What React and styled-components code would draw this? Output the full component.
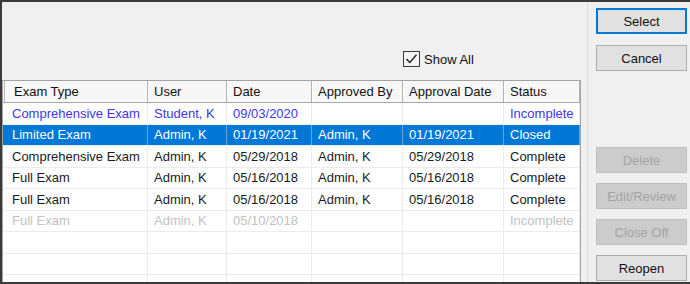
import React from "react";
import styled, { createGlobalStyle } from "styled-components";

const Global = createGlobalStyle`
  html, body { margin: 0; padding: 0; background: #f0f0f0; }
  body { font-family: "Liberation Sans", Arial, sans-serif; font-size: 13px; }
`;

const Window = styled.div`
  width: 690px;
  height: 284px;
  box-sizing: border-box;
  border-top: 2px solid #3a3a3a;
  border-left: 2px solid #3a3a3a;
  border-bottom: 2px solid #3a3a3a;
  background: #f0f0f0;
  display: flex;
  overflow: hidden;
`;

const LeftPane = styled.div`
  width: 586px;
  border-right: 1px solid #dadada;
  display: flex;
  flex-direction: column;
  padding-right: 6px;
  box-sizing: border-box;
`;

const TopArea = styled.div`
  height: 78px;
  flex-shrink: 0;
  display: flex;
  align-items: flex-end;
  padding-left: 401px;
  padding-bottom: 13px;
  box-sizing: border-box;
`;

const CheckLabel = styled.label`
  display: flex;
  align-items: center;
  gap: 4px;
  color: #111;
  font-size: 13px;
`;

const Grid = styled.div`
  flex: 1;
  background: #fff;
  border: 1px solid #a3a3a3;
  border-bottom: none;
  overflow: hidden;
`;

const cols = [145, 79, 85, 91, 101, 76];

const Row = styled.div`
  display: grid;
  grid-template-columns: ${cols.map((c) => c + "px").join(" ")};
  height: ${(p) => (p.$header ? "22px" : "21.5px")};
  box-sizing: border-box;
  border-bottom: 1px solid ${(p) => (p.$header ? "#a8a8a8" : "#ececec")};
  background: ${(p) => (p.$selected ? "#0078d7" : p.$header ? "#f7f7f7" : "#fff")};
  color: ${(p) =>
    p.$selected ? "#fff" : p.$tone === "blue" ? "#3d35f5" : p.$tone === "gray" ? "#c2c2c2" : "#1a1a1a"};
`;

const Cell = styled.div`
  display: flex;
  align-items: center;
  padding-left: ${(p) => (p.$first ? "9px" : "6px")};
  white-space: nowrap;
  overflow: hidden;
  box-sizing: border-box;
  border-right: 1px solid ${(p) => (p.$sel ? "rgba(255,255,255,0.35)" : "#ececec")};
  font-size: 13px;
`;

const HeadCell = styled(Cell)`
  border-right: 1px solid #b4b4b4;
  box-shadow: inset 1px 0 0 #ffffff;
  color: #111;
  ${(p) => p.$first && "border-left: 1px solid #b4b4b4; margin-left: 1px;"}
`;

const RightPane = styled.div`
  flex: 1;
  display: flex;
  flex-direction: column;
  padding: 6px 0 0 8px;
  box-sizing: border-box;
`;

const Button = styled.button`
  flex-shrink: 0;
  width: 91px;
  height: 26px;
  box-sizing: border-box;
  font-family: "Liberation Sans", Arial, sans-serif;
  font-size: 13px;
  padding: 0;
  margin: 0 0 ${(p) => (p.$mb !== undefined ? p.$mb : 10)}px 0;
  background: ${(p) => (p.disabled ? "#cccccc" : "#e1e1e1")};
  color: ${(p) => (p.disabled ? "#a3a3a3" : "#111")};
  border: ${(p) => (p.$focus ? "2px solid #0078d7" : p.disabled ? "1px solid #bfbfbf" : "1px solid #adadad")};
`;

const Spacer = styled.div`
  flex-shrink: 0;
  height: 66px;
`;

const header = ["Exam Type", "User", "Date", "Approved By", "Approval Date", "Status"];
const rows = [
  { cells: ["Comprehensive Exam", "Student, K", "09/03/2020", "", "", "Incomplete"], tone: "blue" },
  { cells: ["Limited Exam", "Admin, K", "01/19/2021", "Admin, K", "01/19/2021", "Closed"], selected: true },
  { cells: ["Comprehensive Exam", "Admin, K", "05/29/2018", "Admin, K", "05/29/2018", "Complete"] },
  { cells: ["Full Exam", "Admin, K", "05/16/2018", "Admin, K", "05/16/2018", "Complete"] },
  { cells: ["Full Exam", "Admin, K", "05/16/2018", "Admin, K", "05/16/2018", "Complete"] },
  { cells: ["Full Exam", "Admin, K", "05/10/2018", "", "", "Incomplete"], tone: "gray" },
  { cells: ["", "", "", "", "", ""] },
  { cells: ["", "", "", "", "", ""] },
  { cells: ["", "", "", "", "", ""] },
];

const CheckBox = () => (
  <svg width="17" height="16" viewBox="0 0 17 16">
    <rect x="0.5" y="0.5" width="16" height="15" fill="#f4f4f4" stroke="#3c3c3c" />
    <path d="M3.5 8 L6.8 11.5 L13.5 3.8" fill="none" stroke="#222" strokeWidth="1.4" />
  </svg>
);

export default function App() {
  return (
    <>
      <Global />
      <Window>
        <LeftPane>
          <TopArea>
            <CheckLabel>
              <CheckBox />
              Show All
            </CheckLabel>
          </TopArea>
          <Grid>
            <Row $header>
              {header.map((h, i) => (
                <HeadCell key={i} $first={i === 0}>
                  {h}
                </HeadCell>
              ))}
            </Row>
            {rows.map((r, ri) => (
              <Row key={ri} $selected={r.selected} $tone={r.tone}>
                {r.cells.map((c, ci) => (
                  <Cell key={ci} $first={ci === 0} $sel={r.selected}>
                    {c}
                  </Cell>
                ))}
              </Row>
            ))}
          </Grid>
        </LeftPane>
        <RightPane>
          <Button $focus $mb={11}>Select</Button>
          <Button>Cancel</Button>
          <Spacer />
          <Button disabled>Delete</Button>
          <Button disabled>Edit/Review</Button>
          <Button disabled>Close Off</Button>
          <Button $mb={0}>Reopen</Button>
        </RightPane>
      </Window>
    </>
  );
}
